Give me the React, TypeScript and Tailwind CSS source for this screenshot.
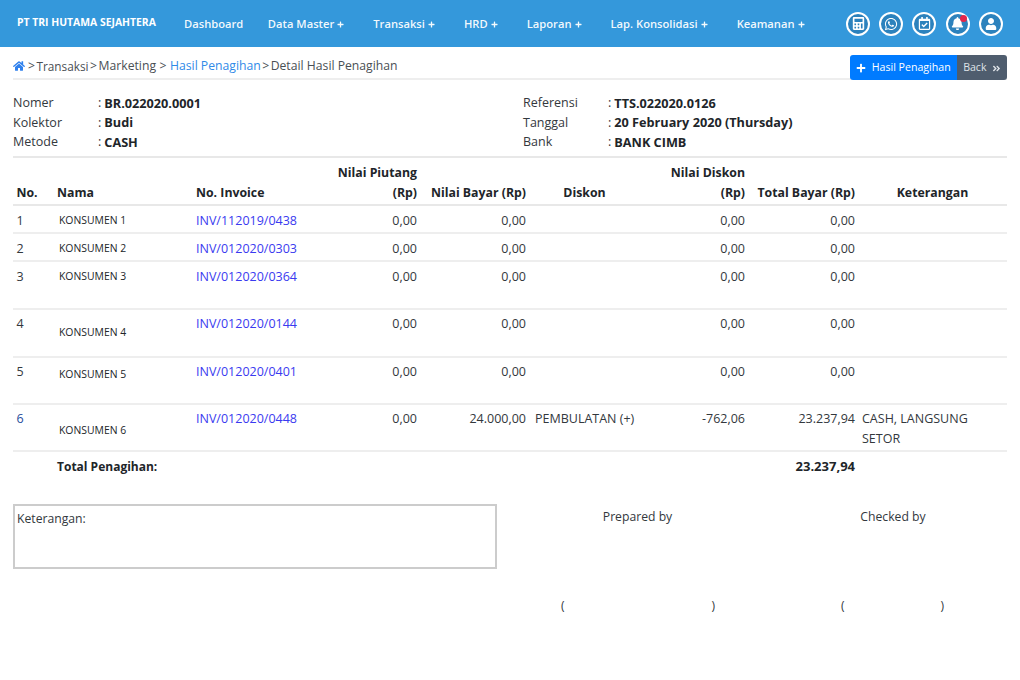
import {
  FaAngleDoubleRight,
  FaBell,
  FaCalculator,
  FaHome,
  FaPlus,
  FaRegCalendarCheck,
  FaUser,
  FaWhatsapp,
} from "react-icons/fa";

const MENU = [
  { label: "Data Master" },
  { label: "Transaksi" },
  { label: "HRD" },
  { label: "Laporan" },
  { label: "Lap. Konsolidasi" },
  { label: "Keamanan" },
];

const ROWS = [
  { no: "1", nama: "KONSUMEN 1", inv: "INV/112019/0438", bayar: "0,00", h: "h-[28px]", top: "pt-[5px]", pad: "pt-0" },
  { no: "2", nama: "KONSUMEN 2", inv: "INV/012020/0303", bayar: "0,00", h: "h-[28px]", top: "pt-[5px]", pad: "pt-0" },
  { no: "3", nama: "KONSUMEN 3", inv: "INV/012020/0364", bayar: "0,00", h: "h-[47.5px]", top: "pt-[5px]", pad: "pt-0" },
  { no: "4", nama: "KONSUMEN 4", inv: "INV/012020/0144", bayar: "0,00", h: "h-[48px]", top: "pt-[4px]", pad: "pt-[8px]" },
  { no: "5", nama: "KONSUMEN 5", inv: "INV/012020/0401", bayar: "0,00", h: "h-[47px]", top: "pt-[4px]", pad: "pt-[2px]" },
  {
    no: "6",
    nama: "KONSUMEN 6",
    inv: "INV/012020/0448",
    bayar: "24.000,00",
    diskon: "PEMBULATAN (+)",
    nilaiDiskon: "-762,06",
    total: "23.237,94",
    ket: "CASH, LANGSUNG SETOR",
    h: "h-[47px]",
    top: "pt-[4px]",
    pad: "pt-[11px]",
  },
];

function NavIcon({ children, dot }: { children: React.ReactNode; dot?: boolean }) {
  return (
    <div className="relative flex h-[24px] w-[24px] items-center justify-center rounded-full border-2 border-white bg-[#2c82bd] text-white">
      {children}
      {dot && <span className="absolute right-[1px] top-[1px] h-[7px] w-[7px] rounded-full bg-[#e3264a]" />}
    </div>
  );
}

function Info({ label, value }: { label: string; value: string }) {
  return (
    <div className="flex h-[19.5px] items-center">
      <span className="w-[85px] shrink-0">{label}</span>
      <span className="mr-[3px]">:</span>
      <b className="-mt-px text-[12.7px] font-bold text-[#212529]">{value}</b>
    </div>
  );
}

export default function App() {
  return (
    <div className="h-[680px] w-[1020px] overflow-hidden bg-white font-['Open_Sans',sans-serif] text-[12.5px] text-[#33383d]">
      {/* Navbar */}
      <nav className="flex h-[47px] items-center bg-[#3498db] pl-[17px] text-white">
        <div className="mb-[2px] w-[167px] text-[10.4px] font-bold">PT TRI HUTAMA SEJAHTERA</div>
        <div className="flex w-[662px] items-center gap-[29px] pt-[1px] text-[11.2px] font-semibold text-white/95">
          <span className="mr-[-4.5px]">Dashboard</span>
          {MENU.map((m) => (
            <span key={m.label} className="flex items-center gap-[3px]">
              {m.label}
              <FaPlus className="mt-[2px] h-[7px] w-[7px]" />
            </span>
          ))}
        </div>
        <div className="flex items-center gap-[9.2px]">
          <NavIcon>
            <FaCalculator className="h-[13px] w-[13px]" />
          </NavIcon>
          <NavIcon>
            <FaWhatsapp className="h-[14px] w-[14px]" />
          </NavIcon>
          <NavIcon>
            <FaRegCalendarCheck className="h-[13px] w-[13px]" />
          </NavIcon>
          <NavIcon dot>
            <FaBell className="h-[13px] w-[13px]" />
          </NavIcon>
          <NavIcon>
            <FaUser className="h-[12px] w-[12px]" />
          </NavIcon>
        </div>
      </nav>

      <div className="mx-[13px]">
        {/* Breadcrumb */}
        <div className="relative flex h-[33px] items-center border-b-2 border-[#eeeeee] pt-[7px] text-[12.2px]">
          <FaHome className="h-[12px] w-[12px] text-[#2f80ed]" />
          <span className="ml-[3px] flex gap-[2.5px] text-[#4a4f54]">
            <span>&gt;</span>
            <span className="ml-[-1px] text-[11.8px] leading-[18px]">Transaksi</span>
            <span className="ml-[-1px]">&gt;</span>
            <span className="ml-[-1px]">Marketing</span>
            <span className="ml-[1px]">&gt;</span>
            <span className="ml-[1px] text-[#2f8ae8]">Hasil Penagihan</span>
            <span className="ml-[-1px]">&gt;</span>
            <span className="ml-[-1px]">Detail Hasil Penagihan</span>
          </span>
          <div className="absolute right-0 top-[8px] flex h-[25px] overflow-hidden rounded-[3px] text-[10.6px] text-white">
            <div className="flex items-center gap-[6px] bg-[#007bff] pl-[5.5px] pr-[6px] pt-[1px]">
              <FaPlus className="h-[10px] w-[10px]" />
              Hasil Penagihan
            </div>
            <div className="flex items-center gap-[5px] bg-[#4f5d6e] px-[6.5px] pt-[1px] text-[#dfe3e8]">
              Back
              <FaAngleDoubleRight className="h-[9px] w-[9px]" />
            </div>
          </div>
        </div>

        {/* Info */}
        <div className="flex h-[78px] border-b-2 border-[#e8e8e8] pt-[14px]">
          <div className="w-[510px]">
            <Info label="Nomer" value="BR.022020.0001" />
            <Info label="Kolektor" value="Budi" />
            <Info label="Metode" value="CASH" />
          </div>
          <div>
            <Info label="Referensi" value="TTS.022020.0126" />
            <Info label="Tanggal" value="20 February 2020 (Thursday)" />
            <Info label="Bank" value="BANK CIMB" />
          </div>
        </div>

        {/* Detail */}
        <table className="w-[994px] table-fixed border-collapse">
          <colgroup>
            <col className="w-[41px]" />
            <col className="w-[139px]" />
            <col className="w-[137px]" />
            <col className="w-[90px]" />
            <col className="w-[109px]" />
            <col className="w-[111px]" />
            <col className="w-[108px]" />
            <col className="w-[110px]" />
            <col className="w-[149px]" />
          </colgroup>
          <thead>
            <tr className="h-[47px] border-b-2 border-[#e8e8e8] align-bottom text-[12.3px] font-bold leading-[20px] text-[#212529]">
              <th className="pb-[1px] pl-[3.5px] pr-[3px] text-left">No.</th>
              <th className="px-[3px] pb-[1px] text-left">Nama</th>
              <th className="px-[3px] pb-[1px] text-left">No. Invoice</th>
              <th className="px-[3px] pb-[1px] text-right">
                <span className="ml-[-40px] block whitespace-nowrap">Nilai Piutang</span>(Rp)
              </th>
              <th className="px-[3px] pb-[1px] text-right">Nilai Bayar (Rp)</th>
              <th className="px-[3px] pb-[1px] text-center">Diskon</th>
              <th className="px-[3px] pb-[1px] text-right">
                Nilai Diskon
                <br />
                (Rp)
              </th>
              <th className="px-[3px] pb-[1px] text-right">Total Bayar (Rp)</th>
              <th className="px-[3px] pb-[1px] text-center">Keterangan</th>
            </tr>
          </thead>
          <tbody>
            {ROWS.map((r) => (
              <tr key={r.no} className={`${r.h} border-b-2 border-[#eeeeee] align-top leading-[20px]`}>
                <td className={`pl-[3.5px] pr-[3px] ${r.top} ${r.no === "6" ? "text-[#1f4e9c]" : ""}`}>{r.no}</td>
                <td className="pl-[5px] pt-[4px] text-[10.4px] text-[#212529]">
                  <div className={r.pad}>{r.nama}</div>
                </td>
                <td className={`px-[3px] ${r.top} text-[#3a3af0]`}>{r.inv}</td>
                <td className={`px-[3px] ${r.top} text-right`}>0,00</td>
                <td className={`px-[3px] ${r.top} text-right`}>{r.bayar}</td>
                <td className={`pl-[6px] ${r.top}`}>{r.diskon}</td>
                <td className={`px-[3px] ${r.top} text-right`}>{r.nilaiDiskon ?? "0,00"}</td>
                <td className={`px-[3px] ${r.top} text-right`}>{r.total ?? "0,00"}</td>
                <td className={`px-[4px] ${r.top}`}>{r.ket}</td>
              </tr>
            ))}
            <tr className="h-[30px] font-bold text-[#212529]">
              <td />
              <td colSpan={2} className="px-[3px] pt-[2px] text-[12px]">
                Total Penagihan:
              </td>
              <td colSpan={4} />
              <td className="px-[3px] pt-[2px] text-right text-[13px]">23.237,94</td>
              <td />
            </tr>
          </tbody>
        </table>

        {/* Footer */}
        <div className="mt-[23px] flex text-[12.2px]">
          <div className="h-[65px] w-[484px] shrink-0 border-2 border-[#cccccc] px-[2px] py-[3px] leading-[20px]">
            Keterangan:
          </div>
          <div className="flex-1 pl-[64px] pt-[4px]">
            <div className="flex">
              <div className="w-[153px] text-center">Prepared by</div>
              <div className="ml-[129px] w-[100px] text-center">Checked by</div>
            </div>
            <div className="mt-[71px] flex text-[12px]">
              <div className="flex w-[154px] justify-between">
                <span>(</span>
                <span>)</span>
              </div>
              <div className="ml-[126px] flex w-[103px] justify-between">
                <span>(</span>
                <span>)</span>
              </div>
            </div>
          </div>
        </div>
      </div>
    </div>
  );
}
